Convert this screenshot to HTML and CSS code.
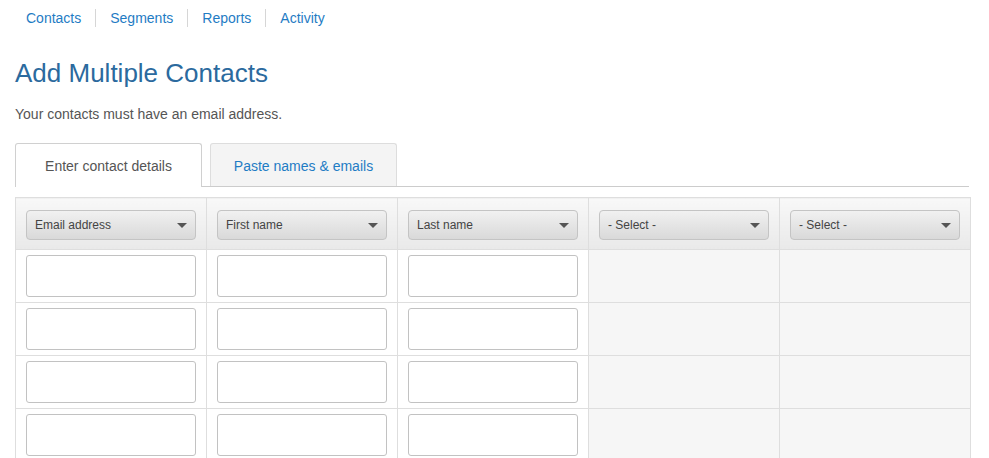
FILE: index.html
```html
<!DOCTYPE html>
<html>
<head>
<meta charset="utf-8">
<link rel="stylesheet" href="styles.css">
</head>
<body>
<div class="page">
  <ul class="nav">
    <li><a href="#">Contacts</a></li>
    <li><a href="#">Segments</a></li>
    <li><a href="#">Reports</a></li>
    <li><a href="#">Activity</a></li>
  </ul>
  <h1 class="title">Add Multiple Contacts</h1>
  <p class="intro">Your contacts must have an email address.</p>
  <div class="tabs">
    <div class="tab active">Enter contact details</div>
    <div class="tab">Paste names &amp; emails</div>
  </div>
  <table class="grid">
    <colgroup>
      <col class="c"><col class="c"><col class="c"><col class="c"><col class="c-last">
    </colgroup>
    <thead>
      <tr>
        <th><div class="select">Email address<span class="caret"></span></div></th>
        <th><div class="select">First name<span class="caret"></span></div></th>
        <th><div class="select">Last name<span class="caret"></span></div></th>
        <th><div class="select">- Select -<span class="caret"></span></div></th>
        <th><div class="select">- Select -<span class="caret"></span></div></th>
      </tr>
    </thead>
    <tbody>
      <tr><td class="f"><div class="input"></div></td><td class="f"><div class="input"></div></td><td class="f"><div class="input"></div></td><td></td><td></td></tr>
      <tr><td class="f"><div class="input"></div></td><td class="f"><div class="input"></div></td><td class="f"><div class="input"></div></td><td></td><td></td></tr>
      <tr><td class="f"><div class="input"></div></td><td class="f"><div class="input"></div></td><td class="f"><div class="input"></div></td><td></td><td></td></tr>
      <tr><td class="f"><div class="input"></div></td><td class="f"><div class="input"></div></td><td class="f"><div class="input"></div></td><td></td><td></td></tr>
      <tr><td class="f"><div class="input"></div></td><td class="f"><div class="input"></div></td><td class="f"><div class="input"></div></td><td></td><td></td></tr>
    </tbody>
  </table>
</div>
</body>
</html>
```
FILE: styles.css
```css
html, body {
  margin: 0;
  padding: 0;
  background: #fff;
  font-family: "Liberation Sans", Arial, sans-serif;
  color: #555;
  overflow: hidden;
}
.page {
  width: 954px;
  padding: 0 15px;
}
.nav {
  list-style: none;
  margin: 0;
  padding: 9px 0 0;
  display: flex;
  height: 18px;
}
.nav li {
  padding: 0 14px;
  border-left: 1px solid #d6d6d6;
  line-height: 18px;
  font-size: 14px;
}
.nav li:first-child {
  border-left: none;
  padding-left: 11px;
}
.nav a {
  color: #1f7cc4;
  text-decoration: none;
}
.title {
  margin: 31px 0 0;
  font-size: 26px;
  font-weight: normal;
  line-height: 30px;
  color: #2b6a9e;
}
.intro {
  margin: 17px 0 0;
  font-size: 14px;
  line-height: 18px;
  color: #555;
}
.tabs {
  margin-top: 20px;
  display: flex;
  gap: 8px;
  border-bottom: 1px solid #cccccc;
  height: 43px;
}
.tab {
  width: 187px;
  height: 43px;
  box-sizing: border-box;
  border: 1px solid #dddddd;
  border-bottom: none;
  border-radius: 3px 3px 0 0;
  background: #f4f4f4;
  color: #1f7cc4;
  font-size: 14px;
  display: flex;
  align-items: center;
  justify-content: center;
  padding-top: 1px;
}
.tab.active {
  height: 44px;
  background: #fff;
  color: #555;
  border-color: #d0d0d0;
}
.grid {
  margin-top: 10px;
  border-collapse: collapse;
  width: 955px;
  table-layout: fixed;
}
.grid col.c {
  width: 191px;
}
.grid col.c-last {
  width: 191px;
}
.grid th, .grid td {
  border: 1px solid #dedede;
  padding: 0 10px;
  box-sizing: border-box;
}
.grid th {
  height: 52px;
  background: linear-gradient(#f8f8f8, #e9e9e9);
  font-weight: normal;
  text-align: left;
  padding-top: 3px;
}
.grid td {
  height: 53px;
  background: #f6f6f6;
}
.grid td.f {
  background: #fff;
}
.select {
  position: relative;
  height: 30px;
  box-sizing: border-box;
  border: 1px solid #c4c4c4;
  border-radius: 4px;
  background: linear-gradient(#f1f1f1, #d9d9d9);
  font-size: 12px;
  line-height: 28px;
  color: #444;
  padding-left: 8px;
}
.caret {
  position: absolute;
  right: 8px;
  top: 12px;
  width: 0;
  height: 0;
  border-left: 5px solid transparent;
  border-right: 5px solid transparent;
  border-top: 5px solid #555;
}
.input {
  height: 42px;
  box-sizing: border-box;
  border: 1px solid #c2c2c2;
  border-radius: 3px;
  background: #fff;
}
```
